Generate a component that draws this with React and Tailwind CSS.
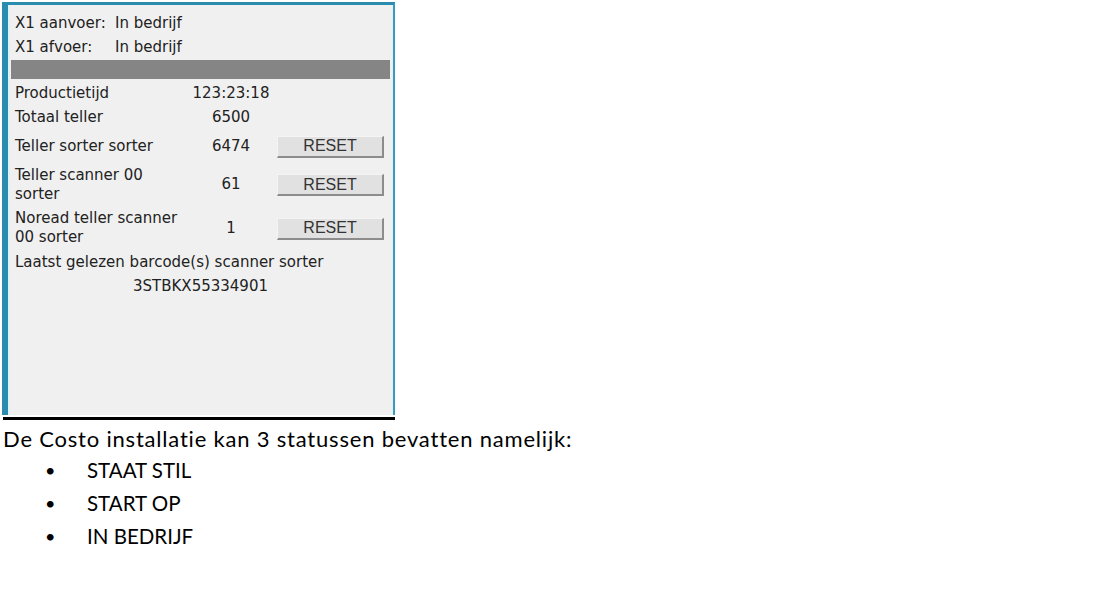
import React from "react";

const panelFont = { fontFamily: '"DejaVu Sans", Verdana, sans-serif' };

function ResetButton() {
  return (
    <button
      className="w-[107px] h-[22px] mt-[1px] bg-[#e1e1e1] border-t border-l border-t-[#f4f4f4] border-l-[#f4f4f4] border-r-2 border-b-2 border-r-[#8c8c8c] border-b-[#8c8c8c] text-[16px] leading-none text-[#333] flex items-center justify-center"
      style={{ fontFamily: '"Liberation Sans", Arial, sans-serif' }}
    >
      RESET
    </button>
  );
}

function Row({ label, value, button, h, mt = 0 }) {
  return (
    <div className="flex items-center" style={{ height: h, marginTop: mt }}>
      <div className="w-[170px] leading-[19px] whitespace-nowrap">{label}</div>
      <div className="w-[92px] text-center">{value}</div>
      {button && <ResetButton />}
    </div>
  );
}

export default function App() {
  return (
    <div className="w-[1115px] h-[595px] bg-white relative overflow-hidden">
      <div className="pt-[2px] pl-[2px]">
        <div
          className="w-[393px] h-[413px] bg-[#f0f0f0] border-l-[6px] border-t-[3px] border-r-[2px] border-l-[#2a8db0] border-t-[#2a8db0] border-r-[#3a9ab8] text-[15px] text-[#222]"
          style={panelFont}
        >
          <div className="h-full border-l-2 border-r border-[#dff2f8] pl-[5px] pr-[2px] pt-[6px]">
            <div className="h-[24px] flex items-center">
              <span className="w-[100px]">X1 aanvoer:</span>
              <span>In bedrijf</span>
            </div>
            <div className="h-[24px] flex items-center">
              <span className="w-[100px]">X1 afvoer:</span>
              <span>In bedrijf</span>
            </div>
            <div className="mt-[1px] -ml-[4px] h-[19px] bg-[#858585]" />
            <Row label="Productietijd" value="123:23:18" h={24} mt={2} />
            <Row label="Totaal teller" value="6500" h={24} />
            <Row label="Teller sorter sorter" value="6474" button h={26} mt={4} />
            <Row
              label={
                <>
                  Teller scanner 00
                  <br />
                  sorter
                </>
              }
              value="61"
              button
              h={39}
              mt={6}
            />
            <Row
              label={
                <>
                  Noread teller scanner
                  <br />
                  00 sorter
                </>
              }
              value="1"
              button
              h={40}
              mt={4}
            />
            <div className="h-[24px] mt-[2px] flex items-center">
              Laatst gelezen barcode(s) scanner sorter
            </div>
            <div className="h-[24px] flex items-center">
              <span className="ml-[118px]">3STBKX55334901</span>
            </div>
          </div>
        </div>
        <div className="w-[392px] ml-[1px] mt-[2px] h-[3px] bg-black" />
      </div>
      <div
        className="text-black"
        style={{ fontFamily: 'Lato, "Open Sans", sans-serif' }}
      >
        <div className="pl-[3px] h-[30px] flex items-center mt-[3px] text-[22px] tracking-[0.8px]">
          De Costo installatie kan 3 statussen bevatten namelijk:
        </div>
        {["STAAT STIL", "START OP", "IN BEDRIJF"].map((t, i) => (
          <div
            key={t}
            className={`flex items-center h-[33px] text-[20.5px] ${i === 0 ? "mt-[1px]" : ""}`}
          >
            <span className="w-[87px] pl-[45px] text-[18px]">•</span>
            <span>{t}</span>
          </div>
        ))}
      </div>
    </div>
  );
}
